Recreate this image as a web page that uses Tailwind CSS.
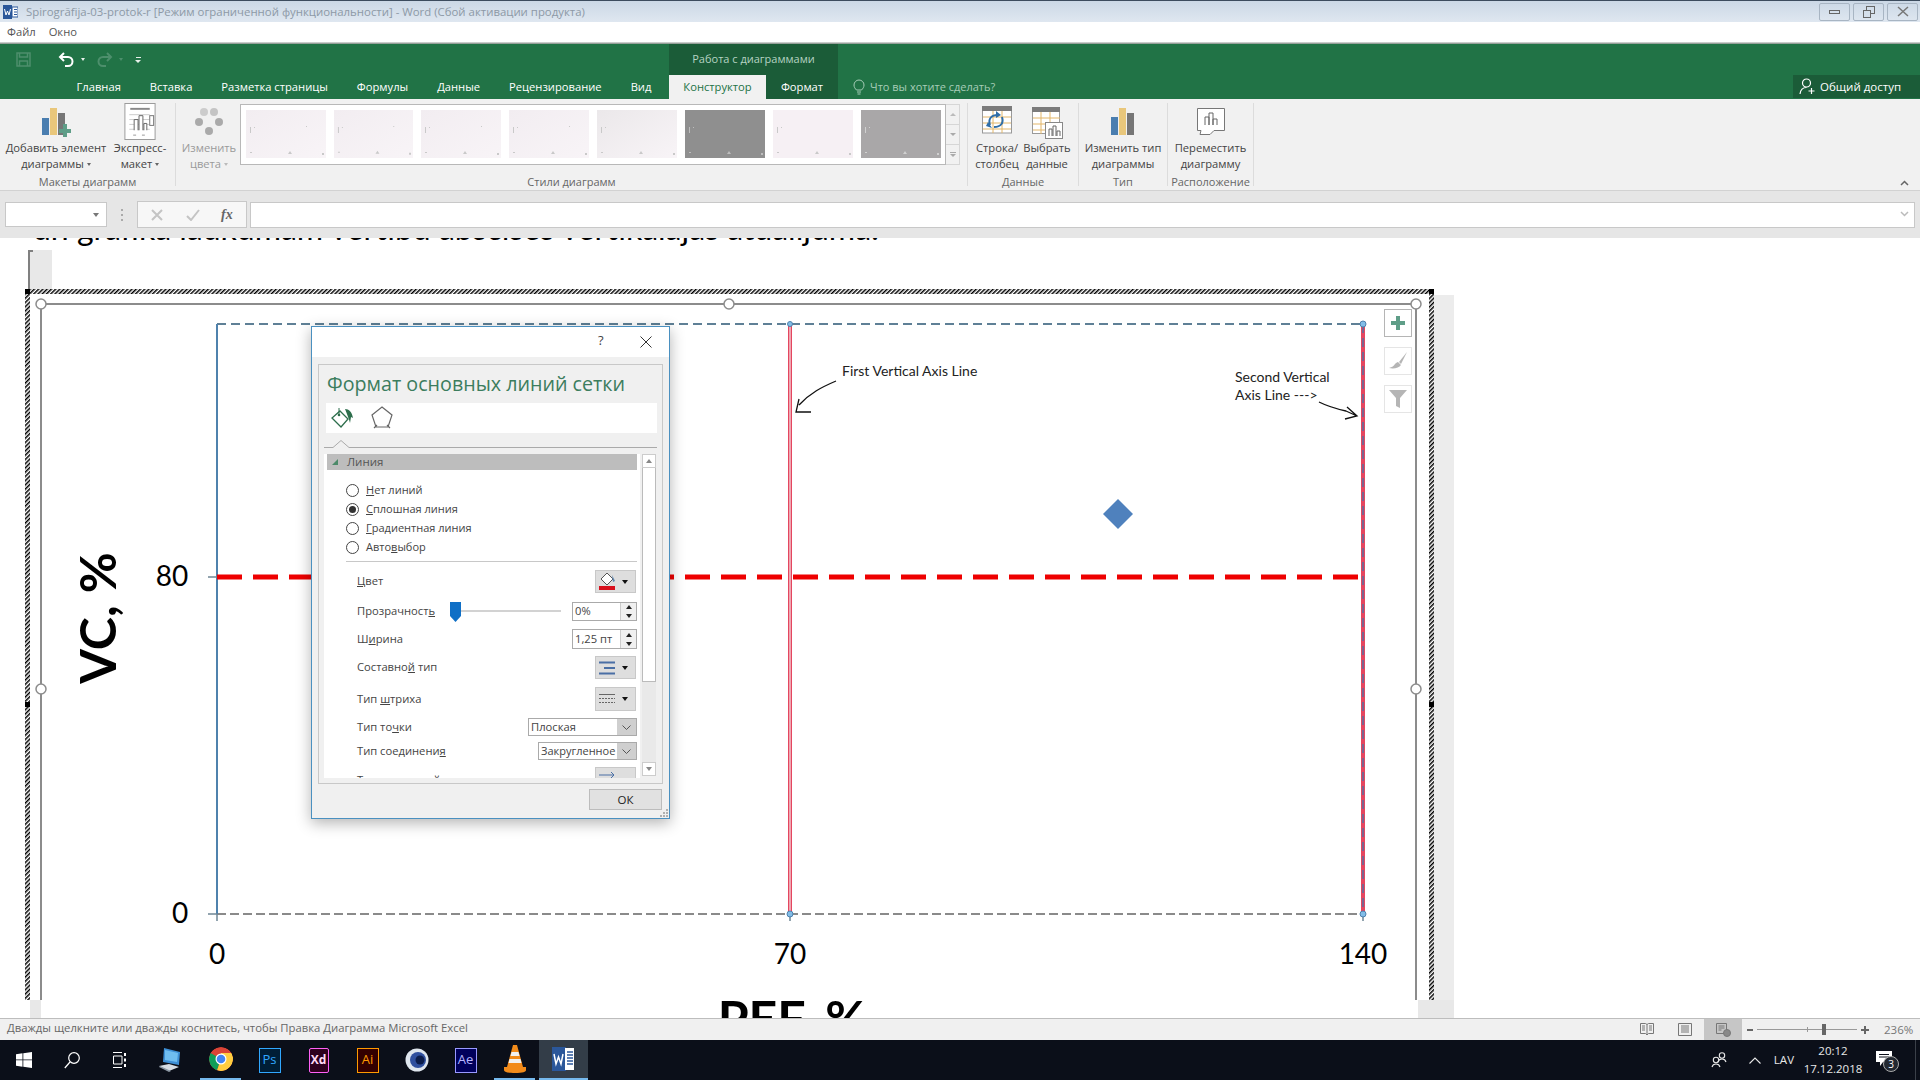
<!DOCTYPE html>
<html lang="ru">
 <head>
  <meta charset="utf-8"/>
  <title>Spirogrāfija-03-protok-r - Word</title>
  <script src="https://cdn.jsdelivr.net/npm/@tailwindcss/browser@4"></script>
 </head>
 <body class="w-[1920px] h-[1080px] overflow-hidden flex flex-col bg-white font-['Open_Sans',sans-serif] text-[11.2px] text-[#444]">

  <!-- title bar -->
  <div class="h-[22px] flex items-center border-t border-[#3c4c5e] bg-gradient-to-b from-[#cbd8e6] to-[#dfe7f0] shrink-0">
   <svg class="ml-[3px] w-[15px] h-[14px]" viewBox="0 0 15 14"><rect width="9" height="14" fill="#2b579a"/><rect x="9" y="2" width="6" height="10" fill="#fff" stroke="#2b579a"/><path d="M11 4.500h3M11 7h3M11 9.500h3" stroke="#2b579a"/><path d="M1.500 4l1.500 6 1.500-4 1.500 4 1.500-6" fill="none" stroke="#fff"/></svg>
   <span class="ml-[8px] text-[#8d99a6] text-[11.4px] whitespace-nowrap">Spirogrāfija-03-protok-r [Режим ограниченной функциональности] - Word (Сбой активации продукта)</span>
   <div class="ml-auto mr-[2px] flex gap-[3px]">
    <div class="w-[31px] h-[18px] border border-[#a8b5c3] rounded-[2px] flex items-center justify-center"><div class="w-[11px] h-[4px] border border-[#666]"></div></div>
    <div class="w-[31px] h-[18px] border border-[#a8b5c3] rounded-[2px] flex items-center justify-center"><svg class="w-[12px] h-[12px]" viewBox="0 0 12 12" fill="none" stroke="#666"><rect x="3.500" y="0.500" width="8" height="7"/><rect x="0.500" y="4.500" width="7" height="7" fill="#d5dfea"/></svg></div>
    <div class="w-[31px] h-[18px] border border-[#a8b5c3] rounded-[2px] flex items-center justify-center"><svg class="w-[12px] h-[11px]" viewBox="0 0 12 11" fill="none" stroke="#777" stroke-width="1.500"><path d="M1 1l10 9M11 1L1 10"/></svg></div>
   </div>
  </div>

  <!-- menu -->
  <div class="h-[20px] flex items-center gap-[13px] pl-[7px] bg-white text-[#555] shrink-0">
   <span>Файл</span><span>Окно</span>
  </div>
  <div class="h-[2px] bg-gradient-to-b from-[#e4e4e4] to-[#7d8a82] shrink-0"></div>

  <!-- green header -->
  <div class="h-[55px] bg-[#217346] shrink-0 relative flex flex-col">
   <div class="h-[31px] flex items-center">
    <svg class="ml-[16px] w-[15px] h-[15px]" viewBox="0 0 15 15" fill="none" stroke="#4d8f6c" stroke-width="1.500"><path d="M1 1h13v13H1z"/><path d="M3.500 1v4h8V1M3.500 14V9h8v5"/></svg>
    <svg class="ml-[27px] w-[17px] h-[15px]" viewBox="0 0 17 15" fill="none" stroke="#fff" stroke-width="2"><path d="M6 1L2 5l4 4"/><path d="M2 5h8a4.500 4.500 0 0 1 0 9H7"/></svg>
    <span class="ml-[6px] border-x-[2.500px] border-x-transparent border-t-[3px] border-t-[#e8f0eb]"></span>
    <svg class="ml-[11px] w-[17px] h-[15px]" viewBox="0 0 17 15" fill="none" stroke="#4d8f6c" stroke-width="2"><path d="M11 1l4 4-4 4"/><path d="M15 5H7a4.500 4.500 0 0 0 0 9h3"/></svg>
    <span class="ml-[6px] border-x-[2.500px] border-x-transparent border-t-[3px] border-t-[#4d8f6c]"></span>
    <div class="ml-[12px] flex flex-col items-center gap-[2px]"><span class="w-[5px] h-[1px] bg-[#e8f0eb]"></span><span class="border-x-[3px] border-x-transparent border-t-[3px] border-t-[#e8f0eb]"></span></div>
   </div>
   <div class="h-[24px] flex items-center text-white pl-[62px]">
    <span class="px-[14.500px]">Главная</span>
    <span class="px-[14.500px]">Вставка</span>
    <span class="px-[14.500px]">Разметка страницы</span>
    <span class="px-[14.500px]">Формулы</span>
    <span class="px-[14.500px]">Данные</span>
    <span class="px-[14.500px]">Рецензирование</span>
    <span class="px-[14.500px]">Вид</span>
   </div>
   <!-- context tabs -->
   <div class="absolute left-[669px] top-0 w-[169px] h-[55px] bg-[#1b5c38] flex flex-col">
    <div class="h-[31px] flex items-center justify-center text-[#b5d3c2] text-[11px]">Работа с диаграммами</div>
    <div class="h-[24px] flex items-stretch">
     <div class="w-[97px] bg-[#f1f1f1] text-[#217346] flex items-center justify-center">Конструктор</div>
     <div class="flex-1 text-white flex items-center justify-center">Формат</div>
    </div>
   </div>
   <div class="absolute left-[853px] top-[31px] h-[24px] flex items-center gap-[5px] text-[#a7cdb8] text-[11px]">
    <svg class="w-[12px] h-[17px]" viewBox="0 0 12 17" fill="none" stroke="#a7cdb8"><path d="M3.500 11C2 9.500 1 8 1 6a5 5 0 0 1 10 0c0 2-1 3.500-2.500 5zM4 13h4M4.500 15h3"/></svg>
    <span>Что вы хотите сделать?</span>
   </div>
   <div class="absolute right-0 top-[31px] w-[127px] h-[23px] bg-[#1b5c38] flex items-center text-white pl-[6px] gap-[4px]">
    <svg class="w-[17px] h-[17px]" viewBox="0 0 17 17" fill="none" stroke="#fff" stroke-width="1.200"><circle cx="7.500" cy="5" r="4"/><path d="M1 16c.5-4 3-6.500 6.500-6.500M9.500 13h6M12.500 10v6"/></svg>
    <span class="text-[11.5px]">Общий доступ</span>
   </div>
  </div>

  <!-- ribbon -->
  <div class="h-[92px] bg-[#f1f1f1] border-b border-[#d2d2d2] flex shrink-0 relative">
   <div class="w-[176px] my-[4px] border-r border-[#dcdcdc] flex flex-col">
    <div class="flex h-[69px] shrink-0">
     <div class="w-[112px] flex flex-col items-center">
      <svg class="w-[30px] h-[30px] mt-[4px] mb-[3px]" viewBox="0 0 30 30"><rect x="1" y="11" width="7" height="17" fill="#4a7eb0"/><rect x="9" y="1" width="7" height="27" fill="#e9c77b"/><rect x="17" y="6" width="7" height="22" fill="#767676"/><path d="M22 17h4v5h4v4h-4v4h-4v-4h-4v-4h4z" fill="#5f9e88"/></svg>
      <span class="leading-[16px] whitespace-nowrap">Добавить элемент</span>
      <span class="leading-[16px] flex items-center gap-[3px]">диаграммы <i class="border-x-[2.500px] border-x-transparent border-t-[3px] border-t-[#666]"></i></span>
     </div>
     <div class="w-[56px] flex flex-col items-center">
      <svg class="w-[32px] h-[37px]" viewBox="0 0 32 38" fill="none"><rect x="0.500" y="0.500" width="31" height="37" fill="#fff" stroke="#9a9a9a"/><path d="M6 6h20" stroke="#888" stroke-width="2"/><path d="M5 12h21M5 17h21M5 22h21M5 27h21" stroke="#ccc"/><path d="M10 28V17h4v11M15 28V13h4v15M20 28v-7h3v7" stroke="#666" fill="#fff"/><rect x="26" y="13" width="4" height="10" stroke="#777" fill="#fff"/><path d="M9 33h3M18 33h3" stroke="#999"/></svg>
      <span class="leading-[16px] whitespace-nowrap">Экспресс-</span>
      <span class="leading-[16px] flex items-center gap-[3px]">макет <i class="border-x-[2.500px] border-x-transparent border-t-[3px] border-t-[#666]"></i></span>
     </div>
    </div>
    <div class="h-[15px] mt-[3px] shrink-0 flex items-center justify-center text-[#666] text-[11px]">Макеты диаграмм</div>
   </div>

   <div class="w-[792px] my-[4px] border-r border-[#dcdcdc] flex flex-col">
    <div class="flex h-[69px] shrink-0">
     <div class="ml-[2px] w-[62px] flex flex-col items-center text-[#9a9a9a]">
      <svg class="w-[30px] h-[32px] mt-[3px] mb-[2px]" viewBox="0 0 30 32" fill="#bbb"><circle cx="10" cy="6" r="4" fill="#ccc"/><circle cx="20" cy="6" r="4" fill="#c4c4c4"/><circle cx="5" cy="16" r="4" fill="#aaa"/><circle cx="25" cy="16" r="4" fill="#aaa"/><circle cx="15" cy="25" r="4" fill="#aaa"/></svg>
      <span class="leading-[16px]">Изменить</span>
      <span class="leading-[16px] flex items-center gap-[3px]">цвета <i class="border-x-[2.500px] border-x-transparent border-t-[3px] border-t-[#bbb]"></i></span>
     </div>
     <div class="flex h-[61px] mt-[1px]">
      <div class="w-[706px] bg-white border border-[#b8b8b8] flex gap-[8px] pl-[5px] pt-[5px]">
       <svg class="w-[80px] h-[48px] bg-gradient-to-br from-[#f2edf1] to-[#f8f4f7]" viewBox="0 0 80 48" fill="#c9c9c9"><path d="M4 17h1v6H4zM8 17h1v1H8zM4 42h2v1H4zM42 44l2-3 2 3zM76 43h2v2h-2zM60 16h1v1h-1z"/></svg>
       <svg class="w-[79px] h-[48px] bg-gradient-to-br from-[#f2edf1] to-[#f8f4f7]" viewBox="0 0 80 48" fill="#c9c9c9"><path d="M4 17h1v6H4zM8 17h1v1H8zM4 42h2v1H4zM42 44l2-3 2 3zM76 43h2v2h-2zM60 16h1v1h-1z"/></svg>
       <svg class="w-[80px] h-[48px] bg-gradient-to-br from-[#f2edf1] to-[#f8f4f7]" viewBox="0 0 80 48" fill="#c9c9c9"><path d="M4 17h1v6H4zM8 17h1v1H8zM4 42h2v1H4zM42 44l2-3 2 3zM76 43h2v2h-2zM60 16h1v1h-1z"/></svg>
       <svg class="w-[80px] h-[48px] bg-gradient-to-br from-[#f2edf1] to-[#f8f4f7]" viewBox="0 0 80 48" fill="#c9c9c9"><path d="M4 17h1v6H4zM8 17h1v1H8zM4 42h2v1H4zM42 44l2-3 2 3zM76 43h2v2h-2zM60 16h1v1h-1z"/></svg>
       <svg class="w-[80px] h-[48px] bg-gradient-to-br from-[#ebe8ea] to-[#f8f4f7]" viewBox="0 0 80 48" fill="#c9c9c9"><path d="M4 17h1v6H4zM8 17h1v1H8zM4 42h2v1H4zM42 44l2-3 2 3zM76 43h2v2h-2z"/></svg>
       <svg class="w-[80px] h-[48px] bg-[#8f8f8f]" viewBox="0 0 80 48" fill="#bdbdbd"><path d="M4 17h1v6H4zM8 17h1v1H8zM4 42h2v1H4zM42 44l2-3 2 3zM76 43h2v2h-2z"/></svg>
       <svg class="w-[80px] h-[48px] bg-[#f6f0f4]" viewBox="0 0 80 48" fill="#c9c9c9"><path d="M4 17h1v6H4zM8 17h1v1H8zM4 42h2v1H4zM42 44l2-3 2 3zM76 43h2v2h-2z"/></svg>
       <svg class="w-[80px] h-[48px] bg-[#a9a7a8]" viewBox="0 0 80 48" fill="#d0d0d0"><path d="M4 17h1v6H4zM8 17h1v1H8zM4 42h2v1H4zM42 44l2-3 2 3zM76 43h2v2h-2z"/></svg>
      </div>
      <div class="w-[14px] flex flex-col border-y border-r border-[#d6d6d6] text-[#bbb]">
       <div class="flex-1 border-b border-[#d6d6d6] flex items-center justify-center"><i class="border-x-[3px] border-x-transparent border-b-[3px] border-b-[#bbb]"></i></div>
       <div class="flex-1 border-b border-[#d6d6d6] flex items-center justify-center"><i class="border-x-[3px] border-x-transparent border-t-[3px] border-t-[#aaa]"></i></div>
       <div class="flex-1 flex flex-col items-center justify-center gap-[1px]"><span class="w-[6px] h-[1px] bg-[#aaa]"></span><i class="border-x-[3px] border-x-transparent border-t-[3px] border-t-[#aaa]"></i></div>
      </div>
     </div>
    </div>
    <div class="h-[15px] mt-[3px] shrink-0 flex items-center justify-center text-[#666] text-[11px]">Стили диаграмм</div>
   </div>

   <div class="w-[111px] my-[4px] border-r border-[#dcdcdc] flex flex-col">
    <div class="flex h-[69px] shrink-0 pl-[2px]">
     <div class="w-[54px] flex flex-col items-center">
      <svg class="w-[30px] h-[28px] mt-[3px] mb-[6px]" viewBox="0 0 30 28" fill="none"><rect x="0.500" y="3" width="29" height="24" fill="#fff" stroke="#999"/><rect y="0" width="30" height="5" fill="#7b7b7b"/><path d="M1 11h28M1 17h28M1 23h28M11 5v22M20 5v22" stroke="#e3b668"/><path d="M8 19c-2-6 1-10 8-10" stroke="#2f6ea8" stroke-width="2"/><path d="M14 5l5 4-5 3z" fill="#2f6ea8"/><path d="M20 11c2 6-1 10-8 10" stroke="#2f6ea8" stroke-width="2"/><path d="M6 16l-2 4 6 2z" fill="#2f6ea8"/></svg>
      <span class="leading-[16px]">Строка/</span>
      <span class="leading-[16px]">столбец</span>
     </div>
     <div class="w-[46px] flex flex-col items-center">
      <svg class="w-[31px] h-[32px] mt-[4px] mb-[1px]" viewBox="0 0 31 32" fill="none"><rect x="0.500" y="0.500" width="27" height="26" fill="#fff" stroke="#999"/><rect width="28" height="5" fill="#7b7b7b"/><path d="M1 11h27M1 17h27M1 23h27M9 5v22M18 5v22" stroke="#e3b668"/><rect x="13.500" y="15.500" width="17" height="16" fill="#fff" stroke="#888"/><path d="M17 29v-7h3v7M21 29V19h3v10M25 29v-5h3v5" stroke="#666"/></svg>
      <span class="leading-[16px]">Выбрать</span>
      <span class="leading-[16px]">данные</span>
     </div>
    </div>
    <div class="h-[15px] mt-[3px] shrink-0 flex items-center justify-center text-[#666] text-[11px]">Данные</div>
   </div>

   <div class="w-[89px] my-[4px] border-r border-[#dcdcdc] flex flex-col">
    <div class="h-[69px] shrink-0 flex flex-col items-center">
     <svg class="w-[24px] h-[27px] mt-[5px] mb-[5px]" viewBox="0 0 24 27"><rect y="9" width="7" height="18" fill="#4a7eb0"/><rect x="8" width="7" height="27" fill="#e9c77b"/><rect x="16" y="5" width="7" height="22" fill="#767676"/></svg>
     <span class="leading-[16px] whitespace-nowrap">Изменить тип</span>
     <span class="leading-[16px]">диаграммы</span>
    </div>
    <div class="h-[15px] mt-[3px] shrink-0 flex items-center justify-center text-[#666] text-[11px]">Тип</div>
   </div>

   <div class="w-[86px] my-[4px] border-r border-[#dcdcdc] flex flex-col">
    <div class="h-[69px] shrink-0 flex flex-col items-center">
     <svg class="w-[28px] h-[27px] mt-[5px] mb-[5px]" viewBox="0 0 28 27" fill="none" stroke="#777"><path d="M.5.500h27v22H17l-4 4H3l1-4H.5z" fill="#fff"/><path d="M8 17V9h4v8M12 17V5h4v12M16 17v-6h4v6" stroke="#666"/></svg>
     <span class="leading-[16px] whitespace-nowrap">Переместить</span>
     <span class="leading-[16px]">диаграмму</span>
    </div>
    <div class="h-[15px] mt-[3px] shrink-0 flex items-center justify-center text-[#666] text-[11px] whitespace-nowrap">Расположение</div>
   </div>
   <svg class="absolute right-[11px] bottom-[4px] w-[9px] h-[6px]" viewBox="0 0 9 6" fill="none" stroke="#666" stroke-width="1.500"><path d="M1 5l3.500-3.500L8 5"/></svg>
  </div>

  <!-- formula bar -->
  <div class="h-[47px] bg-[#e6e6e6] flex items-center shrink-0 relative">
   <div class="ml-[5px] w-[102px] h-[25px] bg-white border border-[#c8c8c8] flex items-center justify-end pr-[7px]"><i class="border-x-[3.500px] border-x-transparent border-t-[4px] border-t-[#777]"></i></div>
   <div class="ml-[14px] w-[2px] flex flex-col gap-[3px]"><span class="h-[2px] bg-[#aaa]"></span><span class="h-[2px] bg-[#aaa]"></span><span class="h-[2px] bg-[#aaa]"></span></div>
   <div class="ml-[14px] w-[110px] h-[27px] bg-[#f7f7f7] border border-[#c8c8c8] flex items-center">
    <svg class="ml-[13px] w-[12px] h-[12px]" viewBox="0 0 12 12" fill="none" stroke="#c4c4c4" stroke-width="2"><path d="M1 1l10 10M11 1L1 11"/></svg>
    <svg class="ml-[23px] w-[14px] h-[12px]" viewBox="0 0 14 12" fill="none" stroke="#c4c4c4" stroke-width="2"><path d="M1 7l4 4 8-10"/></svg>
    <span class="ml-[21px] font-['Liberation_Serif',serif] italic font-bold text-[14px] text-[#666]">fx</span>
   </div>
   <div class="ml-[3px] w-[1665px] h-[26px] bg-white border border-[#c8c8c8]"></div>
   <svg class="absolute right-[11px] top-[20px] w-[9px] h-[6px]" viewBox="0 0 9 6" fill="none" stroke="#bbb" stroke-width="1.500"><path d="M1 1l3.500 3.500L8 1"/></svg>
  </div>

  <!-- document -->
  <div class="relative flex-1 overflow-hidden bg-white">
   <p class="font-['Lato',sans-serif] text-[32px] leading-[32px] text-black whitespace-nowrap pl-[33px] -mt-[26px]">un grafika laukumam vērtību abscises vertikālajās atdalījumā:</p>

   <svg class="absolute left-0 top-0 w-[1920px] h-[780px] font-['Lato',sans-serif]" viewBox="0 238 1920 780" fill="none">
    <defs>
     <pattern id="hatch" width="3" height="3" patternUnits="userSpaceOnUse" patternTransform="rotate(45)"><rect width="3" height="3" fill="#fff"/><rect width="1.500" height="3" fill="#000"/></pattern>
    </defs>
    <!-- side panels -->
    <rect x="30" y="250" width="22" height="39" fill="#e8e8e8"/>
    <path d="M33 251h-4v38" stroke="#808080" stroke-width="2"/>
    <rect x="1434" y="295" width="20" height="723" fill="#ececec"/>
    <rect x="1418" y="1000" width="36" height="18" fill="#e8e8e8"/>
    <rect x="30" y="1000" width="11" height="18" fill="#e8e8e8"/>
    <!-- selection frame -->
    <rect x="25" y="289" width="1409" height="5" fill="url(#hatch)"/>
    <rect x="25" y="294" width="5" height="706" fill="url(#hatch)"/>
    <rect x="1429" y="294" width="5" height="706" fill="url(#hatch)"/>
    <rect x="25" y="289" width="5" height="5" fill="#000"/>
    <rect x="1429" y="289" width="5" height="5" fill="#000"/>
    <rect x="25" y="702" width="5" height="5" fill="#000"/>
    <rect x="1429" y="702" width="5" height="5" fill="#000"/>
    <path d="M41 1000V304h1375v696" stroke="#8c8c8c" stroke-width="2"/>
    <g fill="#fff" stroke="#8c8c8c" stroke-width="1.500">
     <circle cx="41" cy="304" r="5"/><circle cx="729" cy="304" r="5"/><circle cx="1416" cy="304" r="5"/><circle cx="41" cy="689" r="5"/><circle cx="1416" cy="689" r="5"/>
    </g>
    <!-- plot -->
    <path d="M217 324H1363" stroke="#5f8096" stroke-width="2" stroke-dasharray="9 5"/>
    <path d="M217 914H1363" stroke="#8a8a8a" stroke-width="2" stroke-dasharray="9 4"/>
    <path d="M217 324V914" stroke="#4f82ad" stroke-width="2"/>
    <path d="M208 577h9M208 914h9M217 914v7M790 914v7M1363 914v7" stroke="#6f8695" stroke-width="1.500"/>
    <path d="M217 577H1363" stroke="#ee0000" stroke-width="5" stroke-dasharray="25 11"/>
    <path d="M790 324V914M1363 324V914" stroke="#e4465f" stroke-width="4"/>
    <path d="M790 324V914" stroke="#f2c8ce" stroke-width="1.500"/>
    <path d="M1363 324V914" stroke="#5a6f9e" stroke-width="1.500" stroke-dasharray="9 5"/>
    <g fill="#82bde8" stroke="#4f82ad"><circle cx="790" cy="324" r="2.500"/><circle cx="1363" cy="324" r="3"/><circle cx="790" cy="914" r="3"/><circle cx="1363" cy="914" r="3"/></g>
    <path d="M1118 499l15 15-15 15-15-15z" fill="#4f81bd"/>
    <!-- axis labels -->
    <g fill="#000" font-size="28" text-anchor="middle">
     <text x="172" y="586">80</text><text x="180" y="923">0</text>
     <text x="217" y="964">0</text><text x="790" y="964">70</text><text x="1363" y="964">140</text>
    </g>
    <text transform="translate(116 618) rotate(-90)" fill="#000" font-size="50" font-weight="700" text-anchor="middle">VC, %</text>
    <text x="792" y="1037" fill="#000" font-size="50" font-weight="700" text-anchor="middle">PEF, %</text>
    <!-- notes -->
    <g fill="#222" font-size="14">
     <text x="842" y="376">First Vertical Axis Line</text>
     <text x="1235" y="382">Second Vertical</text><text x="1235" y="400">Axis Line ---&gt;</text>
    </g>
    <g stroke="#111" stroke-width="1.300">
     <path d="M836 381c-14 6-26 12-37 24M799 399l-3 13 15 0"/>
     <path d="M1319 402c10 5 18 7 27 9l11 5M1347 407l10 9-12 3"/>
    </g>
   </svg>

   <!-- chart side buttons -->
   <div class="absolute left-[1384px] top-[71px] flex flex-col gap-[10px]">
    <div class="w-[28px] h-[28px] bg-white border border-[#b5b5b5] flex items-center justify-center">
     <svg class="w-[14px] h-[14px]" viewBox="0 0 14 14"><path d="M5 0h4v5h5v4H9v5H5V9H0V5h5z" fill="#5f9e88"/></svg>
    </div>
    <div class="w-[28px] h-[28px] bg-white border border-[#e5e5e5] flex items-center justify-center">
     <svg class="w-[18px] h-[18px]" viewBox="0 0 18 18"><path d="M18 0l-8 10 2 2z" fill="#b5b5b5"/><path d="M9 10l3 3c-2 3-7 4-12 3 3-1 5-2 6-4 1-1 2-2 3-2z" fill="#b5b5b5"/></svg>
    </div>
    <div class="w-[28px] h-[28px] bg-white border border-[#e5e5e5] flex items-center justify-center">
     <svg class="w-[18px] h-[18px]" viewBox="0 0 18 18"><path d="M0 0h18l-7 8v10l-4-2V8z" fill="#b5b5b5"/></svg>
    </div>
   </div>

   <!-- format dialog -->
   <div class="absolute left-[311px] top-[88px] w-[359px] h-[493px] bg-[#f0f0f0] border border-[#4a90c0] shadow-[0_4px_14px_rgba(0,0,0,0.3)] flex flex-col text-[#444]">
    <div class="h-[30px] bg-white flex items-center shrink-0">
     <span class="ml-[286px] -mt-[2px] text-[13px]">?</span>
     <svg class="ml-[36px] w-[12px] h-[12px]" viewBox="0 0 12 12" stroke="#333" fill="none"><path d="M.5.500l11 11M11.500.500l-11 11"/></svg>
    </div>
    <div class="ml-[6px] mt-[7px] w-[345px] h-[420px] border border-[#c8c8c8] flex flex-col shrink-0">
     <div class="h-[38px] pl-[8px] flex items-center text-[19.700px] text-[#3c7d5e] whitespace-nowrap">Формат основных линий сетки</div>
     <div class="ml-[7px] w-[331px] h-[30px] bg-white flex items-center pl-[4px]">
      <svg class="w-[24px] h-[24px]" viewBox="0 0 24 24" fill="none"><path d="M10 5l8 8-7 8-9-9z" stroke="#2d6e4c" stroke-width="1.300"/><path d="M9 2v6" stroke="#2d6e4c"/><circle cx="9" cy="9" r="1.300" fill="#2d6e4c"/><path d="M15 3c4 0 7 3 8 9l-2-1-1 6c-1-4-3-9-5-14z" fill="#2d6e4c"/></svg>
      <svg class="ml-[17px] w-[22px] h-[24px]" viewBox="0 0 22 24" fill="none" stroke="#666" stroke-width="1.200"><path d="M11 1l10 8-4 12H5L1 9z"/><path d="M3 22l3-3M19 22l-3-3"/></svg>
     </div>
     <div class="h-[21px] relative shrink-0">
      <svg class="absolute left-[5px] top-0 w-[333px] h-[21px]" viewBox="0 0 333 21" fill="none" stroke="#aaa"><path d="M0 14.500h9l8-7 8 7h308"/></svg>
     </div>
     <div class="ml-[5px] flex h-[324px]">
      <div class="w-[316px] h-[324px] bg-white overflow-hidden flex flex-col shrink-0">
       <div class="mx-[3px] h-[16px] bg-[#bdbdbd] flex items-center shrink-0">
        <svg class="ml-[4px] w-[8px] h-[8px]" viewBox="0 0 8 8"><path d="M7 1v6H1z" fill="#4c8a69"/></svg>
        <span class="ml-[8px] text-[11.500px] text-[#555]">Линия</span>
       </div>
       <div class="mt-[11px] pl-[22px] flex flex-col text-[11px]">
        <div class="h-[19px] flex items-center gap-[7px]"><span class="w-[13px] h-[13px] rounded-full border border-[#444] bg-white"></span><span><u>Н</u>ет линий</span></div>
        <div class="h-[19px] flex items-center gap-[7px]"><span class="w-[13px] h-[13px] rounded-full border border-[#444] bg-white flex items-center justify-center"><span class="w-[7px] h-[7px] rounded-full bg-[#333]"></span></span><span><u>С</u>плошная линия</span></div>
        <div class="h-[19px] flex items-center gap-[7px]"><span class="w-[13px] h-[13px] rounded-full border border-[#444] bg-white"></span><span><u>Г</u>радиентная линия</span></div>
        <div class="h-[19px] flex items-center gap-[7px]"><span class="w-[13px] h-[13px] rounded-full border border-[#444] bg-white"></span><span>Авто<u>в</u>ыбор</span></div>
       </div>
       <div class="mt-[4px] ml-[22px] mr-[3px] h-[1px] bg-[#c8c8c8] shrink-0"></div>
       <div class="mt-[8px] h-[23px] pl-[33px] pr-[4px] flex items-center justify-between shrink-0">
        <span><u>Ц</u>вет</span>
        <div class="w-[41px] h-[23px] bg-[#dedede] border border-[#c8c8c8] flex items-center">
         <svg class="ml-[3px] w-[17px] h-[19px]" viewBox="0 0 17 19" fill="none"><path d="M8 1l6 6-6 6-6-6z" fill="#fff" stroke="#555"/><path d="M13 3l3 6-2 1z" fill="#5f86b0"/><rect y="14" width="16" height="4" fill="#d8101c"/></svg>
         <i class="ml-[6px] border-x-[3.500px] border-x-transparent border-t-[4px] border-t-[#111]"></i>
        </div>
       </div>
       <div class="mt-[9px] h-[19px] pl-[33px] pr-[3px] flex items-center shrink-0">
        <span class="w-[93px]">Прозрачност<u>ь</u></span>
        <svg class="w-[11px] h-[20px] shrink-0" viewBox="0 0 11 20"><path d="M0 0h11v14l-5.500 6L0 14z" fill="#0f6fc6"/></svg>
        <div class="w-[100px] h-[2px] bg-[#d2d2d2] -mt-[1px] shrink-0"></div>
        <div class="ml-[11px] w-[65px] h-[19px] border border-[#aaa] flex items-center pl-[2px]">0%
         <div class="ml-auto w-[16px] h-full border-l border-[#ccc] flex flex-col items-center justify-around bg-[#f0f0f0]"><i class="border-x-[3px] border-x-transparent border-b-[4px] border-b-[#222]"></i><i class="border-x-[3px] border-x-transparent border-t-[4px] border-t-[#222]"></i></div>
        </div>
       </div>
       <div class="mt-[8px] h-[20px] pl-[33px] pr-[3px] flex items-center justify-between shrink-0">
        <span>Ш<u>и</u>рина</span>
        <div class="w-[65px] h-[20px] border border-[#aaa] flex items-center pl-[2px]">1,25 пт
         <div class="ml-auto w-[16px] h-full border-l border-[#ccc] flex flex-col items-center justify-around bg-[#f0f0f0]"><i class="border-x-[3px] border-x-transparent border-b-[4px] border-b-[#222]"></i><i class="border-x-[3px] border-x-transparent border-t-[4px] border-t-[#222]"></i></div>
        </div>
       </div>
       <div class="mt-[7px] h-[23px] pl-[33px] pr-[4px] flex items-center justify-between shrink-0">
        <span>Составно<u>й</u> тип</span>
        <div class="w-[41px] h-[23px] bg-[#dedede] border border-[#c8c8c8] flex items-center">
         <svg class="ml-[3px] w-[17px] h-[14px]" viewBox="0 0 17 14"><path d="M0 1.500h16M5 7h11M0 12.500h16" stroke="#4a6fa5" stroke-width="2"/></svg>
         <i class="ml-[6px] border-x-[3.500px] border-x-transparent border-t-[4px] border-t-[#111]"></i>
        </div>
       </div>
       <div class="mt-[8px] h-[24px] pl-[33px] pr-[4px] flex items-center justify-between shrink-0">
        <span>Тип <u>ш</u>триха</span>
        <div class="w-[41px] h-[24px] bg-[#dedede] border border-[#c8c8c8] flex items-center">
         <svg class="ml-[3px] w-[17px] h-[14px]" viewBox="0 0 17 14"><path d="M0 2.500h16" stroke="#666"/><path d="M0 6.500h16M0 10.500h16" stroke="#666" stroke-dasharray="2 1"/></svg>
         <i class="ml-[6px] border-x-[3.500px] border-x-transparent border-t-[4px] border-t-[#111]"></i>
        </div>
       </div>
       <div class="mt-[7px] h-[18px] pl-[33px] pr-[3px] flex items-center justify-between shrink-0">
        <span>Тип то<u>ч</u>ки</span>
        <div class="w-[109px] h-[18px] border border-[#aaa] flex items-center pl-[2px]">Плоская
         <div class="ml-auto w-[19px] h-full bg-[#cfcfcf] flex items-center justify-center"><svg class="w-[9px] h-[5px]" viewBox="0 0 9 5" fill="none" stroke="#555"><path d="M.5.500l4 4 4-4"/></svg></div>
        </div>
       </div>
       <div class="mt-[6px] h-[18px] pl-[33px] pr-[3px] flex items-center justify-between shrink-0">
        <span>Тип соединени<u>я</u></span>
        <div class="w-[99px] h-[18px] border border-[#aaa] flex items-center pl-[2px] text-[11px] whitespace-nowrap">Закругленное
         <div class="ml-auto w-[19px] h-full bg-[#cfcfcf] flex items-center justify-center shrink-0"><svg class="w-[9px] h-[5px]" viewBox="0 0 9 5" fill="none" stroke="#555"><path d="M.5.500l4 4 4-4"/></svg></div>
        </div>
       </div>
       <div class="mt-[7px] h-[23px] pl-[33px] pr-[4px] flex items-start justify-between shrink-0">
        <span class="mt-[5px]">Тип начальной стрелки</span>
        <div class="w-[41px] h-[23px] bg-[#dedede] border border-[#c8c8c8] flex items-start justify-start">
         <svg class="ml-[3px] mt-[3px] w-[17px] h-[8px]" viewBox="0 0 17 8" fill="none" stroke="#4a6fa5"><path d="M0 4h15M12 1l3 3-3 3"/></svg>
        </div>
       </div>
      </div>
      <div class="ml-[2px] w-[14px] h-[322px] flex flex-col shrink-0">
       <div class="h-[14px] bg-white border border-[#ccc] flex items-center justify-center"><i class="border-x-[3.500px] border-x-transparent border-b-[4px] border-b-[#888]"></i></div>
       <div class="h-[214px] bg-white border-x border-b border-[#bbb]"></div>
       <div class="flex-1 bg-[#e9e9e9]"></div>
       <div class="h-[14px] bg-white border border-[#ccc] flex items-center justify-center"><i class="border-x-[3.500px] border-x-transparent border-t-[4px] border-t-[#888]"></i></div>
      </div>
     </div>
    </div>
    <div class="mt-[5px] mr-[7px] flex justify-end">
     <div class="w-[73px] h-[21px] bg-[#e1e1e1] border border-[#bcbcbc] flex items-center justify-center text-[#222] text-[11.500px]">ОК</div>
    </div>
    <svg class="absolute right-[1px] bottom-[1px] w-[8px] h-[8px]" viewBox="0 0 8 8" fill="#b0b0b0"><rect x="6" y="0" width="2" height="2"/><rect x="3" y="3" width="2" height="2"/><rect x="6" y="3" width="2" height="2"/><rect x="0" y="6" width="2" height="2"/><rect x="3" y="6" width="2" height="2"/><rect x="6" y="6" width="2" height="2"/></svg>
   </div>
  </div>

  <!-- status bar -->
  <div class="h-[22px] bg-[#f0f0f0] border-t border-[#bdbdbd] flex items-center pb-[2px] shrink-0 text-[#666] relative">
   <span class="pl-[7px] text-[11.300px] whitespace-nowrap">Дважды щелкните или дважды коснитесь, чтобы Правка Диаграмма Microsoft Excel</span>
   <div class="absolute right-0 top-0 h-full w-[280px] flex items-center">
    <svg class="w-[14px] h-[13px]" viewBox="0 0 14 13" fill="none" stroke="#777"><path d="M.5.500h5l1.500 1 1.500-1h5v10h-5L7 12l-1.500-1.500h-5zM7 1.500V12M2 3h3M2 5h3M2 7h3M9 3h3M9 5h3M9 7h3"/></svg>
    <svg class="ml-[24px] w-[14px] h-[13px]" viewBox="0 0 14 13" fill="none" stroke="#777"><path d="M.5.500h13v12H.5zM3 3h8M3 5h8M3 7h8M3 9h8"/></svg>
    <div class="ml-[12px] w-[38px] h-[21px] bg-[#c6c6c6] flex items-center justify-center">
     <svg class="w-[15px] h-[14px]" viewBox="0 0 15 14" fill="none" stroke="#777"><path d="M.5.500h10v10H.5zM2.500 3h6M2.500 5h6M2.500 7h3"/><circle cx="11" cy="10" r="3.500" fill="#888"/></svg>
    </div>
    <span class="ml-[5px] w-[6px] h-[2px] bg-[#666]"></span>
    <div class="ml-[4px] w-[100px] h-[1px] bg-[#999] relative">
     <span class="absolute left-[50px] -top-[2px] w-[1px] h-[5px] bg-[#999]"></span>
     <span class="absolute left-[65px] -top-[5px] w-[4px] h-[11px] bg-[#666]"></span>
    </div>
    <svg class="ml-[4px] w-[8px] h-[8px]" viewBox="0 0 8 8"><path d="M3 0h2v3h3v2H5v3H3V5H0V3h3z" fill="#666"/></svg>
    <span class="ml-[15px] text-[11.500px] text-[#777]">236%</span>
   </div>
  </div>

  <!-- taskbar -->
  <div class="h-[40px] bg-[#0b0f19] flex items-stretch shrink-0 text-white">
   <div class="w-[48px] flex items-center justify-center">
    <svg class="w-[16px] h-[16px]" viewBox="0 0 16 16" fill="#fff"><path d="M0 2.200L6.500 1.300V7.500H0zM7.300 1.200L16 0V7.500H7.300zM0 8.300H6.500V14.700L0 13.800zM7.300 8.300H16V16L7.300 14.800z"/></svg>
   </div>
   <div class="w-[48px] flex items-center justify-center">
    <svg class="w-[16px] h-[17px]" viewBox="0 0 16 17" fill="none" stroke="#fff" stroke-width="1.200"><circle cx="10" cy="6" r="5.300"/><path d="M6 10L.8 16"/></svg>
   </div>
   <div class="w-[48px] flex items-center justify-center">
    <svg class="w-[16px] h-[16px]" viewBox="0 0 16 16" fill="none" stroke="#fff"><path d="M1 .500h9M1 15.500h9M1.500 4h8.500v8H1.500z"/><path d="M13 1v3M13 6.500v3M13 12v3" stroke-width="2"/></svg>
   </div>
   <div class="w-[52px] flex items-center justify-center">
    <svg class="w-[24px] h-[26px]" viewBox="0 0 24 26"><path d="M6 1l16 4-1 13-16-3z" fill="#3d8fd6"/><path d="M7 3l13 3-1 9-12-2z" fill="#6fbdf0"/><path d="M1 19l10-2 10 3-10 4z" fill="#d6dde4"/><path d="M1 20l10 5 2-1-11-5z" fill="#8b97a3"/></svg>
   </div>
   <div class="w-[41px] mx-[4px] flex items-center justify-center border-b-[2px] border-[#76b9ed]">
    <svg class="w-[24px] h-[24px] rounded-full" viewBox="0 0 24 24"><circle cx="12" cy="12" r="12" fill="#db4437"/><path d="M12 12L1.600 6A12 12 0 0 0 8 23.300z" fill="#0f9d58"/><path d="M12 12l-3.900 11.300A12 12 0 0 0 22.400 6H12z" fill="#ffcd40"/><circle cx="12" cy="12" r="5.500" fill="#fff"/><circle cx="12" cy="12" r="4.300" fill="#4285f4"/></svg>
   </div>
   <div class="w-[49px] flex items-center justify-center">
    <div class="w-[22px] h-[25px] border-[1.500px] border-[#31a8ff] bg-[#001e36] text-[#31a8ff] text-[13px] flex items-center justify-center">Ps</div>
   </div>
   <div class="w-[49px] flex items-center justify-center">
    <div class="w-[20px] h-[25px] border-[1.500px] border-[#ff61f6] rounded-[2px] bg-[#2e001e] text-[#ffd9f5] font-bold text-[12px] flex items-center justify-center">Xd</div>
   </div>
   <div class="w-[49px] flex items-center justify-center">
    <div class="w-[22px] h-[25px] border-[1.500px] border-[#ff9a00] bg-[#330000] text-[#ff9a00] text-[13px] flex items-center justify-center">Ai</div>
   </div>
   <div class="w-[49px] flex items-center justify-center">
    <svg class="w-[24px] h-[26px]" viewBox="0 0 24 26"><circle cx="12" cy="13" r="11.500" fill="#dfe6ee"/><circle cx="13" cy="13" r="8" fill="#2f4f9e"/><circle cx="15" cy="13" r="4.500" fill="#0b1c4a"/></svg>
   </div>
   <div class="w-[49px] flex items-center justify-center">
    <div class="w-[22px] h-[25px] border-[1.500px] border-[#9999ff] bg-[#00005b] text-[#b5b5ff] text-[13px] flex items-center justify-center">Ae</div>
   </div>
   <div class="w-[41px] mx-[4px] flex items-center justify-center border-b-[2px] border-[#76b9ed]">
    <svg class="w-[22px] h-[28px]" viewBox="0 0 22 28"><path d="M9 0h4l6 22H3z" fill="#f28b1a"/><path d="M7.500 7h7l1 4h-9zM5.500 14h11l1 4h-13z" fill="#f1f1f1"/><path d="M0 22h22v3c0 2-3 3-11 3S0 27 0 25z" fill="#f28b1a"/></svg>
   </div>
   <div class="w-[49px] flex items-center justify-center bg-[#333d48] border-b-[2px] border-[#76b9ed]">
    <svg class="w-[23px] h-[24px]" viewBox="0 0 23 24"><rect y="0" width="14" height="24" fill="#2b579a"/><rect x="13" y="1" width="9" height="22" fill="#fff"/><path d="M15 5h6M15 8h6M15 11h6M15 14h6M15 17h6" stroke="#2b579a" stroke-width="1.500"/><path d="M2 7l2 10 2.500-7 2.500 7 2-10" fill="none" stroke="#fff" stroke-width="1.500"/></svg>
   </div>
   <div class="ml-auto flex items-center pr-[4px]">
    <svg class="w-[17px] h-[16px]" viewBox="0 0 17 16" fill="none" stroke="#e8e8e8" stroke-width="1.100"><circle cx="11" cy="3.500" r="2.700"/><path d="M7 10c.5-2 2-3 4-3s3.500 1 4 3"/><circle cx="5" cy="8" r="2.700"/><path d="M1 15c.5-2 2-3 4-3s3.500 1 4 3"/></svg>
    <svg class="ml-[21px] w-[12px] h-[7px]" viewBox="0 0 12 7" fill="none" stroke="#e8e8e8" stroke-width="1.100"><path d="M.5 6.500L6 1l5.500 5.500"/></svg>
    <span class="ml-[13px] text-[11.500px] text-[#e8e8e8]">LAV</span>
    <div class="ml-[11px] w-[56px] flex flex-col items-center text-[11.500px] text-[#e8e8e8] leading-[18px]"><span>20:12</span><span>17.12.2018</span></div>
    <div class="ml-[15px] w-[20px] h-[24px] relative">
     <svg class="w-[16px] h-[15px] mt-[3px]" viewBox="0 0 16 15"><path d="M0 0h16v11H7l-3 4v-4H0z" fill="#fff"/><path d="M3 3.500h10M3 6h10" stroke="#0b0f19"/></svg>
     <span class="absolute left-[7px] top-[8px] w-[16px] h-[16px] rounded-full bg-[#222831] border border-[#aaa] flex items-center justify-center text-[10px]">3</span>
    </div>
    <span class="ml-[19px] w-[1px] h-[40px] bg-[#3b4049]"></span>
   </div>
  </div>
 </body>
</html>
